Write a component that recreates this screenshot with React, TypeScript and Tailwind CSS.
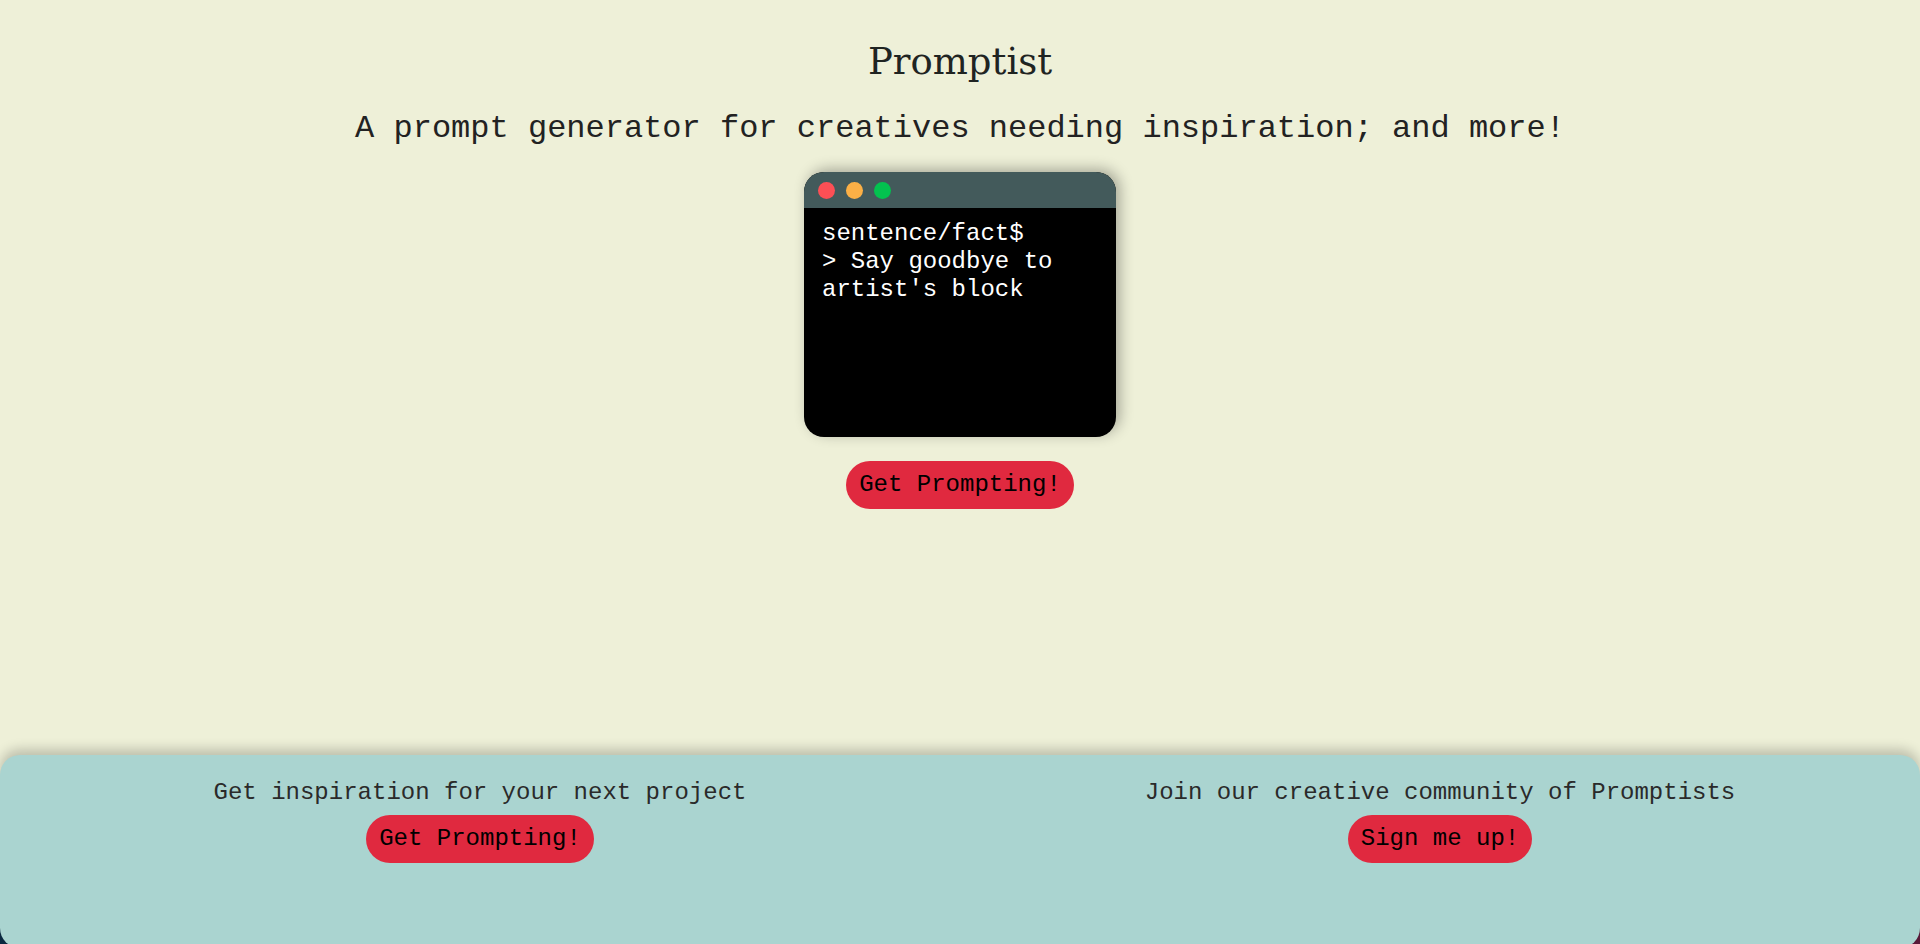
import React from "react";

const mono = "font-['Liberation_Mono','Courier_New',monospace]";

function PillButton({ children }: { children: React.ReactNode }) {
  return (
    <button
      className={`${mono} rounded-full bg-[#e0293f] px-[13px] py-[10px] text-[24px] leading-[28px] text-black`}
    >
      {children}
    </button>
  );
}

function Terminal() {
  return (
    <div className="w-[312px] h-[265px] rounded-[20px] overflow-hidden bg-black flex flex-col shadow-[4px_-3px_14px_rgba(0,0,0,0.3)]">
      {/* title bar */}
      <div className="h-[36px] bg-[#435a5b] flex items-center gap-[11px] px-[14px]">
        <span className="w-[17px] h-[17px] rounded-full bg-[#fc4f55]" />
        <span className="w-[17px] h-[17px] rounded-full bg-[#fbb046]" />
        <span className="w-[17px] h-[17px] rounded-full bg-[#03c24f]" />
      </div>
      <div className={`${mono} px-[18px] pt-[12px] text-[24px] leading-[28px] text-white`}>
        <p>sentence/fact$</p>
        <p>&gt; Say goodbye to artist's block</p>
      </div>
    </div>
  );
}

export default function App() {
  return (
    <div className="min-h-screen bg-linear-to-r from-[#0b2a42] to-[#5c1a3a]">
      {/* Hero */}
      <main className="h-[775px] bg-[#eef0d8] flex flex-col items-center pt-[40px]">
        <h1 className="font-['DejaVu_Serif',serif] text-[37px] leading-[44px] text-[#1f2422]">
          Promptist
        </h1>
        <p className={`${mono} mt-[27px] text-[32px] leading-[36px] text-[#222]`}>
          A prompt generator for creatives needing inspiration; and more!
        </p>
        <div className="mt-[25px]">
          <Terminal />
        </div>
        <div className="mt-[24px]">
          <PillButton>Get Prompting!</PillButton>
        </div>
      </main>

      {/* Footer */}
      <footer className="relative -mt-[20px] h-[193px] rounded-[20px] bg-[#aad4d0] shadow-[0_-6px_12px_rgba(0,0,0,0.2)] grid grid-cols-2 pt-[24px]">
        <div className="flex flex-col items-center gap-[8px]">
          <p className={`${mono} text-[24px] leading-[28px] text-[#2a2a2a]`}>
            Get inspiration for your next project
          </p>
          <PillButton>Get Prompting!</PillButton>
        </div>
        <div className="flex flex-col items-center gap-[8px]">
          <p className={`${mono} text-[24px] leading-[28px] text-[#2a2a2a]`}>
            Join our creative community of Promptists
          </p>
          <PillButton>Sign me up!</PillButton>
        </div>
      </footer>
    </div>
  );
}
